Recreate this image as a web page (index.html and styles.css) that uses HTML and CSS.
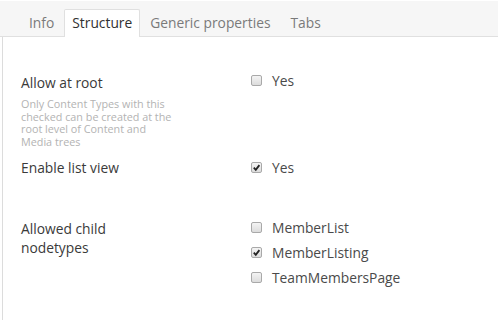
FILE: index.html
```html
<!DOCTYPE html>
<html>
<head>
  <title>Document Type - Structure</title>
  <link rel="stylesheet" href="styles.css">
</head>
<body>
  <div class="tabs">
    <div class="tab">Info</div>
    <div class="tab active">Structure</div>
    <div class="tab">Generic properties</div>
    <div class="tab">Tabs</div>
  </div>

  <div class="content">
    <div class="row row-root">
      <div class="label">
        <div class="label-title">Allow at root</div>
        <div class="label-desc">Only Content Types with this checked can be created at the root level of Content and Media trees</div>
      </div>
      <div class="controls">
        <label class="check"><span class="box"></span>Yes</label>
      </div>
    </div>

    <div class="row row-list">
      <div class="label">
        <div class="label-title">Enable list view</div>
      </div>
      <div class="controls">
        <label class="check"><span class="box checked"><svg viewBox="0 0 10 10"><path d="M2 5.2 L4.2 7.6 L8.2 2.4" /></svg></span>Yes</label>
      </div>
    </div>

    <div class="row row-child">
      <div class="label">
        <div class="label-title multi">Allowed child<br>nodetypes</div>
      </div>
      <div class="controls list">
        <label class="check"><span class="box"></span>MemberList</label>
        <label class="check"><span class="box checked"><svg viewBox="0 0 10 10"><path d="M2 5.2 L4.2 7.6 L8.2 2.4" /></svg></span>MemberListing</label>
        <label class="check"><span class="box"></span>TeamMembersPage</label>
      </div>
    </div>
  </div>
</body>
</html>
```

FILE: styles.css
```css
* {
  margin: 0;
  padding: 0;
  box-sizing: border-box;
  font-family: "Open Sans", "Liberation Sans", Arial, sans-serif;
}

body {
  background: #fff;
  color: #343434;
  height: 100vh;
  display: flex;
  flex-direction: column;
}

.tabs {
  height: 36px;
  margin-top: 1px;
  background: #f6f6f6;
  border-bottom: 1px solid #e0e0e0;
  display: flex;
  align-items: flex-end;
  padding-left: 19px;
}

.tab {
  font-size: 13.8px;
  color: #7a7a7a;
  padding: 0 9px;
  height: 28px;
  line-height: 26px;
  margin-bottom: -1px;
  border: 1px solid transparent;
  border-bottom: none;
}

.tab.active {
  background: #fff;
  color: #303030;
  padding: 0 7px;
  border-color: #e0e0e0;
  border-radius: 2px 2px 0 0;
}

.content {
  flex: 1;
  margin-left: 2px;
  border-left: 1px solid #dcdcdc;
  padding: 33px 0 0 18px;
}

.row {
  display: grid;
  grid-template-columns: 229px 1fr;
}

.row-root .label {
  padding-top: 3px;
}

.row-list .label {
  padding-top: 10px;
}

.row-list .controls {
  padding-top: 9px;
}

.row-list {
  margin-bottom: 38px;
}

.row-child .label {
  padding-top: 3px;
}

.label-title {
  font-size: 13.8px;
  line-height: 20px;
  color: #3a3a3a;
}

.label-title.multi {
  line-height: 19px;
}

.label-desc {
  width: 152px;
  margin-top: 5px;
  font-size: 10.8px;
  line-height: 12.5px;
  color: #b3b3b3;
}

.controls {
  display: flex;
  flex-direction: column;
}

.controls.list {
  margin-top: -1.5px;
}

.check {
  display: flex;
  align-items: center;
  height: 20px;
  font-size: 13.8px;
  color: #4a4a4a;
}

.list .check {
  height: 25px;
}

.box {
  width: 11px;
  height: 11px;
  margin: 0 10px 0 1px;
  border: 1px solid #a9a9a9;
  border-radius: 2px;
  background: linear-gradient(#f4f4f4, #dcdcdc);
  display: flex;
  align-items: center;
  justify-content: center;
}

.box svg {
  width: 9px;
  height: 9px;
  fill: none;
  stroke: #222;
  stroke-width: 2;
}
```
